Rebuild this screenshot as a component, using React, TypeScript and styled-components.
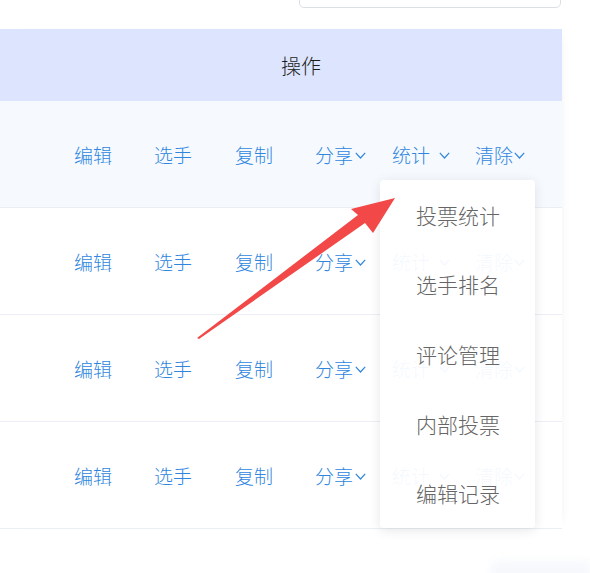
import React from 'react';
import styled, { createGlobalStyle } from 'styled-components';

const GlobalStyle = createGlobalStyle`
	html, body {
		margin: 0;
		padding: 0;
		background: #ffffff;
	}
	body {
		font-family: "Noto Sans CJK SC", "Noto Sans", sans-serif;
		font-weight: 300;
		overflow: hidden;
	}
`;

const Page = styled.div`
	position: relative;
	width: 590px;
	height: 573px;
	overflow: hidden;
`;

const TopBar = styled.div`
	height: 29px;
	width: 562px;
	display: flex;
	justify-content: flex-end;
	align-items: flex-start;
`;

const SearchBox = styled.div`
	width: 262px;
	height: 40px;
	margin-top: -32px;
	margin-right: 1px;
	border: 1px solid #dcdfe6;
	border-radius: 5px;
	background: #fff;
	box-sizing: border-box;
`;

const Table = styled.div`
	width: 562px;
	box-shadow: 6px 0 10px -8px rgba(0, 0, 0, 0.08);
`;

const HeaderCell = styled.div`
	height: 72px;
	background: #dce5fd;
	display: flex;
	align-items: center;
	justify-content: center;
	padding-left: 40px;
	font-size: 20px;
	color: #1c1c1c;
`;

const Row = styled.div<{ $hover?: boolean }>`
	height: 106px;
	border-bottom: 1px solid #ebeef5;
	background: ${(p) => (p.$hover ? '#f6faff' : '#ffffff')};
	display: grid;
	grid-template-columns: 80px 81px 80px 77px 83px auto;
	align-items: center;
	padding-left: 74px;
`;

const Link = styled.span`
	display: inline-flex;
	align-items: center;
	font-size: 19px;
	color: #2f86de;
	white-space: nowrap;
`;

const Chevron = styled.svg<{ $gap: number }>`
	width: 11px;
	height: 7px;
	margin-left: ${(p) => p.$gap}px;
	margin-top: 2px;
`;

const Dropdown = styled.div`
	position: absolute;
	left: 380px;
	top: 180px;
	width: 155px;
	background: rgba(255, 255, 255, 0.94);
	border-radius: 4px;
	box-shadow: 0 2px 12px rgba(0, 0, 0, 0.1);
	display: flex;
	flex-direction: column;
`;

const MenuItem = styled.div`
	height: 69.6px;
	display: flex;
	align-items: center;
	padding-left: 36px;
	font-size: 21px;
	color: #666666;
`;

const ArrowLayer = styled.svg`
	position: absolute;
	left: 0;
	top: 0;
	width: 590px;
	height: 573px;
	pointer-events: none;
`;

const Blob = styled.div`
	position: absolute;
	right: 0;
	bottom: -10px;
	width: 100px;
	height: 22px;
	border-radius: 10px 0 0 0;
	background: #f6f8fc;
	filter: blur(4px);
`;

const Down = ({ gap }: { gap: number }) => (
	<Chevron $gap={gap} viewBox="0 0 11 7">
		<polyline points="0.8,0.8 5.5,6 10.2,0.8" fill="none" stroke="#2f86de" strokeWidth="1.2" />
	</Chevron>
);

const menu = ['投票统计', '选手排名', '评论管理', '内部投票', '编辑记录'];

export default function App() {
	return (
		<Page>
			<GlobalStyle />
			<TopBar>
				<SearchBox />
			</TopBar>
			<Table>
				<HeaderCell>操作</HeaderCell>
				{[0, 1, 2, 3].map((i) => (
					<Row key={i} $hover={i === 0}>
						<Link>编辑</Link>
						<Link>选手</Link>
						<Link>复制</Link>
						<Link>
							分享
							<Down gap={2} />
						</Link>
						<Link>
							统计
							<Down gap={9} />
						</Link>
						<Link>
							清除
							<Down gap={1} />
						</Link>
					</Row>
				))}
			</Table>
			<Dropdown>
				{menu.map((m) => (
					<MenuItem key={m}>{m}</MenuItem>
				))}
			</Dropdown>
			<Blob />
			<ArrowLayer viewBox="0 0 590 573">
				<polygon
					points="197,338 358,215 351,209 395,198 373,233 365,223 199,339"
					fill="#f24848"
				/>
			</ArrowLayer>
		</Page>
	);
}
